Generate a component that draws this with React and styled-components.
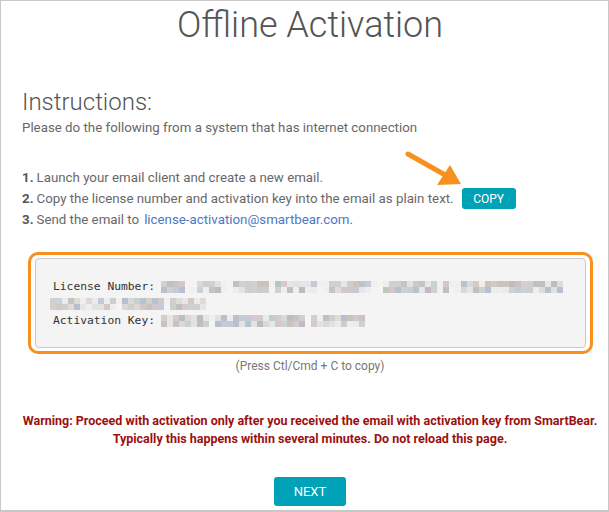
import React from "react";
import styled, { createGlobalStyle } from "styled-components";

const Global = createGlobalStyle`
  html, body { margin: 0; padding: 0; background: #fff; }
  body { font-family: Roboto, "Open Sans", Arial, sans-serif; }
  * { box-sizing: border-box; }
`;

const Frame = styled.div`
  width: 609px;
  height: 512px;
  border: 1px solid #c8c8c8;
  border-bottom-width: 2px;
  padding: 0 9px 0 20px;
  display: flex;
  flex-direction: column;
  color: #666;
  overflow: hidden;
`;

const Title = styled.h1`
  margin: 3px 0 0;
  font-weight: 300;
  font-size: 36px;
  line-height: 42px;
  text-align: center;
  color: #555;
`;

const Heading = styled.h2`
  margin: 42px 0 0 1px;
  font-weight: 300;
  font-size: 24px;
  line-height: 28px;
  color: #555;
`;

const Lead = styled.p`
  margin: 3px 0 0 1px;
  font-size: 13.3px;
  line-height: 18px;
  color: #686868;
`;

const Steps = styled.ol`
  list-style: none;
  margin: 30px 0 0 1px;
  padding: 0;
  display: flex;
  flex-direction: column;
`;

const Step = styled.li`
  font-size: 13.3px;
  line-height: 21px;
  height: 21px;
  display: flex;
  align-items: center;
  color: #686868;
  b { font-weight: 700; margin-right: 3px; color: #555; }
`;

const Link = styled.a`
  color: #4c78c0;
  text-decoration: none;
  margin-left: 5px;
`;

const ButtonWrap = styled.span`
  position: relative;
  display: inline-flex;
  margin-left: 8px;
`;

const Button = styled.button`
  border: none;
  background: #00a2b7;
  color: #fff;
  font-family: Roboto, Arial, sans-serif;
  font-size: ${(p) => p.$size}px;
  width: ${(p) => p.$w}px;
  height: ${(p) => p.$h}px;
  border-radius: 3px;
  padding: 0;
  text-transform: uppercase;
  cursor: pointer;
`;

const Arrow = styled.svg`
  position: absolute;
  left: -58px;
  top: -38px;
  width: 62px;
  height: 40px;
  overflow: visible;
`;

const Highlight = styled.div`
  margin: 22px 6px 0 7px;
  border: 3px solid #f7901e;
  border-radius: 10px;
  padding: 3px 4px;
`;

const CodeBox = styled.div`
  background: #f4f4f4;
  border: 1px solid #c9c9c9;
  border-radius: 4px;
  height: 90px;
  padding: 19px 0 0 17px;
  font-family: "DejaVu Sans Mono", "Liberation Mono", monospace;
  font-size: 11.3px;
  color: #333;
`;

const CodeLine = styled.div`
  height: 17px;
  display: flex;
  align-items: center;
  margin-left: ${(p) => p.$indent || 0}px;
  white-space: pre;
`;

const Pixels = styled.span`
  display: inline-grid;
  grid-auto-flow: column;
  grid-template-rows: 6px 6px;
  grid-auto-columns: 6px;
  margin-left: ${(p) => p.$gap || 0}px;
`;

const Px = styled.span`
  display: block;
`;

const Hint = styled.div`
  margin-top: 4px;
  text-align: center;
  font-size: 12px;
  line-height: 16px;
  color: #777;
`;

const Warning = styled.p`
  margin: 38px 0 0;
  text-align: center;
  font-size: 12.5px;
  line-height: 18px;
  font-weight: 700;
  color: #9b1111;
`;

const Footer = styled.div`
  margin-top: 29px;
  display: flex;
  justify-content: center;
`;

function makeRand(seed) {
  let s = seed;
  return () => {
    s = (s * 16807) % 2147483647;
    return (s - 1) / 2147483646;
  };
}

const palette = [
  "#d2cfcf", "#c6c3c3", "#dbd9d8", "#e2e2e2", "#ebebeb", "#c1bfc1",
  "#cdd0d4", "#c3ccd6", "#b7bfd0", "#d2c8c9", "#cad0cd", "#dfdbd6",
  "#d6cacd", "#bfbbc2", "#eeeeee", "#ccc4bc", "#b8c4cc", "#e6e6e6",
];

function PixelRun({ cols, seed, gaps = [], gap }) {
  const rand = makeRand(seed);
  const cells = [];
  for (let c = 0; c < cols; c++) {
    const isGap = gaps.includes(c);
    for (let r = 0; r < 2; r++) {
      const col = isGap
        ? rand() > 0.5 ? "#f0f0f0" : "#f4f4f4"
        : palette[Math.floor(rand() * palette.length)];
      cells.push(<Px key={c + "-" + r} style={{ background: col }} />);
    }
  }
  return <Pixels $gap={gap}>{cells}</Pixels>;
}

export default function App() {
  return (
    <>
      <Global />
      <Frame>
        <Title>Offline Activation</Title>
        <Heading>Instructions:</Heading>
        <Lead>Please do the following from a system that has internet connection</Lead>
        <Steps>
          <Step><b>1.</b>Launch your email client and create a new email.</Step>
          <Step>
            <b>2.</b>Copy the license number and activation key into the email as plain text.
            <ButtonWrap>
              <Arrow viewBox="0 0 62 40">
                <line x1="4" y1="4" x2="42" y2="25.5" stroke="#f7901e" strokeWidth="5" strokeLinecap="round" />
                <polygon points="57,34 33,35 46,15" fill="#f7901e" />
              </Arrow>
              <Button $w={54} $h={21} $size={12}>Copy</Button>
            </ButtonWrap>
          </Step>
          <Step>
            <b>3.</b>Send the email to <Link href="#">license-activation@smartbear.com</Link>.
          </Step>
        </Steps>
        <Highlight>
          <CodeBox>
            <CodeLine>
              License Number:
              <PixelRun cols={67} seed={11} gap={6} gaps={[4, 5, 10, 11, 18, 26, 27, 35, 36, 46, 48, 49]} />
            </CodeLine>
            <CodeLine $indent={-3}>
              <PixelRun cols={26} seed={23} gaps={[11, 19]} />
            </CodeLine>
            <CodeLine>
              Activation Key:
              <PixelRun cols={34} seed={37} gap={6} gaps={[8, 24]} />
            </CodeLine>
          </CodeBox>
        </Highlight>
        <Hint>(Press Ctl/Cmd + C to copy)</Hint>
        <Warning>
          Warning: Proceed with activation only after you received the email with activation key from SmartBear.
          <br />
          Typically this happens within several minutes. Do not reload this page.
        </Warning>
        <Footer>
          <Button $w={72} $h={29} $size={13}>Next</Button>
        </Footer>
      </Frame>
    </>
  );
}
